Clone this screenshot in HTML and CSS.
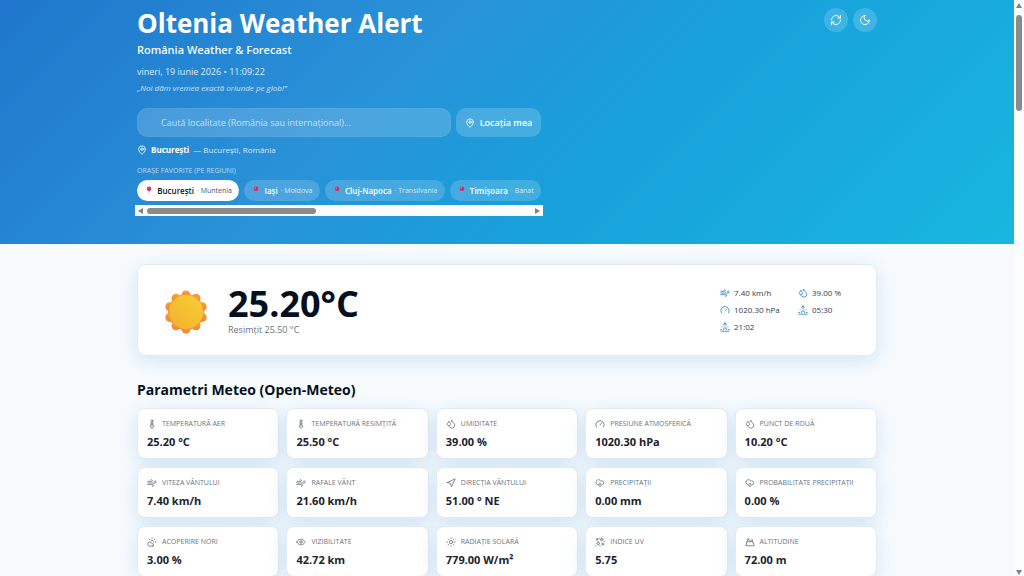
FILE: index.html
```html
<!DOCTYPE html>
<html lang="ro">

<head>
  <meta charset="UTF-8">
  <meta name="viewport" content="width=device-width, initial-scale=1" />
  <title>Oltenia Weather Alert</title>
  <link rel="stylesheet" href="styles.css">
</head>

<body>
  <!-- icon sprite -->
  <svg class="sprite" aria-hidden="true">
    <symbol id="i-pin" viewBox="0 0 24 24"><path d="M20 10c0 5-5.500 10.200-7.400 11.800a1 1 0 0 1-1.200 0C9.500 20.200 4 15 4 10a8 8 0 0 1 16 0z"/><circle cx="12" cy="10" r="3"/></symbol>
    <symbol id="i-refresh" viewBox="0 0 24 24"><path d="M3 12a9 9 0 0 1 9-9 9.750 9.750 0 0 1 6.740 2.740L21 8"/><path d="M21 3v5h-5"/><path d="M21 12a9 9 0 0 1-9 9 9.750 9.750 0 0 1-6.740-2.740L3 16"/><path d="M8 16H3v5"/></symbol>
    <symbol id="i-moon" viewBox="0 0 24 24"><path d="M12 3a6 6 0 0 0 9 9 9 9 0 1 1-9-9z"/></symbol>
    <symbol id="i-wind" viewBox="0 0 24 24"><path d="M12.800 19.600A2 2 0 1 0 14 16H2"/><path d="M17.500 8a2.500 2.500 0 1 1 2 4H2"/><path d="M9.800 4.400A2 2 0 1 1 11 8H2"/></symbol>
    <symbol id="i-drops" viewBox="0 0 24 24"><path d="M7 16.300c2.200 0 4-1.830 4-4.050 0-1.160-.570-2.260-1.710-3.190S7.290 6.750 7 5.300c-.290 1.450-1.140 2.840-2.290 3.760S3 11.100 3 12.250c0 2.220 1.800 4.050 4 4.050z"/><path d="M12.560 6.600A10.970 10.970 0 0 0 14 3.020c.5 2.500 2 4.900 4 6.500s3 3.500 3 5.500a6.980 6.980 0 0 1-11.910 4.970"/></symbol>
    <symbol id="i-gauge" viewBox="0 0 24 24"><path d="m12 14 4-4"/><path d="M3.340 19a10 10 0 1 1 17.320 0"/></symbol>
    <symbol id="i-sunrise" viewBox="0 0 24 24"><path d="M12 2v8"/><path d="m4.930 10.930 1.410 1.410"/><path d="M2 18h2"/><path d="M20 18h2"/><path d="m19.070 10.930-1.410 1.410"/><path d="M22 22H2"/><path d="m8 6 4-4 4 4"/><path d="M16 18a4 4 0 0 0-8 0"/></symbol>
    <symbol id="i-thermo" viewBox="0 0 24 24"><path d="M14 4v10.540a4 4 0 1 1-4 0V4a2 2 0 0 1 4 0z"/><path d="M12 9v8"/></symbol>
    <symbol id="i-nav" viewBox="0 0 24 24"><path d="m3 11 19-9-9 19-2-8-8-2z"/></symbol>
    <symbol id="i-rain" viewBox="0 0 24 24"><path d="M8 16H7A6 6 0 1 1 13.500 7H16a4.500 4.500 0 0 1 1 9"/><path d="M12 13c-1 1.500-2.500 3-2.500 5a2.500 2.500 0 0 0 5 0c0-2-1.500-3.500-2.500-5z"/></symbol>
    <symbol id="i-cloudsun" viewBox="0 0 24 24"><path d="M12 2v2"/><path d="m4.930 4.930 1.410 1.410"/><path d="M20 12h2"/><path d="m19.070 4.930-1.410 1.410"/><path d="M15.950 12.650a4 4 0 0 0-5.930-4.130"/><path d="M13 22H7a5 5 0 1 1 4.900-6H13a3 3 0 0 1 0 6z"/></symbol>
    <symbol id="i-eye" viewBox="0 0 24 24"><path d="M2 12s3.500-7 10-7 10 7 10 7-3.500 7-10 7-10-7-10-7z"/><circle cx="12" cy="12" r="3"/></symbol>
    <symbol id="i-sun" viewBox="0 0 24 24"><circle cx="12" cy="12" r="4"/><path d="M12 2v2M12 20v2M4.930 4.930l1.410 1.410M17.660 17.660l1.410 1.410M2 12h2M20 12h2M6.340 17.660l-1.410 1.410M19.070 4.930l-1.410 1.410"/></symbol>
    <symbol id="i-uv" viewBox="0 0 24 24"><path d="M8 11.500 9.300 14l2.700 1.500L9.300 17 8 19.500 6.700 17 4 15.500 6.700 14z"/><path d="M16 2.500 17.200 5l2.800 1-2.800 1.500L16 10l-1.200-2.500L12 6l2.800-1z"/><path d="M5 3v5M2.500 5.500h5M19 14v6M16 17h6M12 21v1M22 10v1M2 20v1M10 3v1"/></symbol>
    <symbol id="i-mountain" viewBox="0 0 24 24"><path d="M7 4 2 21h20L17 6l-4 5z"/><path d="m5 12 4-2 3 3 3-3 4 3"/></symbol>
    <symbol id="i-pushpin" viewBox="0 0 24 24"><path d="M11 11h2l-.5 12h-1z" fill="#8d9aac"/><circle cx="12" cy="7" r="6" fill="#e0245e"/><circle cx="10" cy="5" r="2" fill="#f5749a"/></symbol>
  </svg>

  <div class="window">
    <div class="page">
      <header class="hero">
        <div class="container hero-inner">
          <div class="hero-main">
            <h1>Oltenia Weather Alert</h1>
            <div class="subtitle">România Weather &amp; Forecast</div>
            <div class="date">vineri, 19 iunie 2026 • 11:09:22</div>
            <div class="motto">„Noi dăm vremea exactă oriunde pe glob!”</div>
            <form class="search">
              <input type="text" aria-label="Caută localitate" placeholder="Caută localitate (România sau internațional)..." />
              <button type="button" class="locate"><svg class="icon"><use href="#i-pin"/></svg>Locația mea</button>
            </form>
            <div class="place"><svg class="icon"><use href="#i-pin"/></svg><strong>București</strong><span>— București, România</span></div>
            <div class="fav-title">ORAȘE FAVORITE (PE REGIUNI)</div>
            <div class="favs">
              <button class="chip active"><svg class="pushpin"><use href="#i-pushpin"/></svg>București <small>· Muntenia</small></button>
              <button class="chip"><svg class="pushpin"><use href="#i-pushpin"/></svg>Iași <small>· Moldova</small></button>
              <button class="chip"><svg class="pushpin"><use href="#i-pushpin"/></svg>Cluj-Napoca <small>· Transilvania</small></button>
              <button class="chip"><svg class="pushpin"><use href="#i-pushpin"/></svg>Timișoara <small>· Banat</small></button>
            </div>
            <div class="hbar"><i class="arrow left"></i><div class="track"><div class="thumb"></div></div><i class="arrow right"></i></div>
          </div>
          <div class="actions">
            <button aria-label="Reîncarcă"><svg class="icon"><use href="#i-refresh"/></svg></button>
            <button aria-label="Mod întunecat"><svg class="icon"><use href="#i-moon"/></svg></button>
          </div>
        </div>
      </header>

      <main class="container">
        <section class="current">
          <svg class="sun" viewBox="0 0 44 44" aria-hidden="true">
            <defs>
              <linearGradient id="ray" x1="0" y1="0" x2="0" y2="1"><stop offset="0" stop-color="#f5a43a"/><stop offset="1" stop-color="#f5823c"/></linearGradient>
              <linearGradient id="disc" x1="1" y1="0" x2="0" y2="1"><stop offset="0" stop-color="#f8cf35"/><stop offset="1" stop-color="#f3b02f"/></linearGradient>
            </defs>
            <g fill="url(#ray)">
              <circle cx="22" cy="22" r="18"/>
              <circle cx="22" cy="5" r="4.500"/><circle cx="32" cy="8.250" r="4.500"/><circle cx="38.200" cy="16.750" r="4.500"/><circle cx="38.200" cy="27.250" r="4.500"/><circle cx="32" cy="35.750" r="4.500"/>
              <circle cx="22" cy="39" r="4.500"/><circle cx="12" cy="35.750" r="4.500"/><circle cx="5.800" cy="27.250" r="4.500"/><circle cx="5.800" cy="16.750" r="4.500"/><circle cx="12" cy="8.250" r="4.500"/>
            </g>
            <circle cx="22" cy="22" r="17" fill="url(#disc)"/>
          </svg>
          <div class="reading">
            <div class="temp">25.20°C</div>
            <div class="feels">Resimțit 25.50 °C</div>
          </div>
          <div class="facts">
            <div><svg class="icon"><use href="#i-wind"/></svg>7.40 km/h</div>
            <div><svg class="icon"><use href="#i-drops"/></svg>39.00 %</div>
            <div><svg class="icon"><use href="#i-gauge"/></svg>1020.30 hPa</div>
            <div><svg class="icon"><use href="#i-sunrise"/></svg>05:30</div>
            <div><svg class="icon"><use href="#i-sunrise"/></svg>21:02</div>
          </div>
        </section>

        <h2>Parametri Meteo (Open-Meteo)</h2>
        <section class="params">
          <div class="param"><div class="label"><svg class="icon"><use href="#i-thermo"/></svg>TEMPERATURĂ AER</div><div class="value">25.20 °C</div></div>
          <div class="param"><div class="label"><svg class="icon"><use href="#i-thermo"/></svg>TEMPERATURĂ RESIMȚITĂ</div><div class="value">25.50 °C</div></div>
          <div class="param"><div class="label"><svg class="icon"><use href="#i-drops"/></svg>UMIDITATE</div><div class="value">39.00 %</div></div>
          <div class="param"><div class="label"><svg class="icon"><use href="#i-gauge"/></svg>PRESIUNE ATMOSFERICĂ</div><div class="value">1020.30 hPa</div></div>
          <div class="param"><div class="label"><svg class="icon"><use href="#i-drops"/></svg>PUNCT DE ROUĂ</div><div class="value">10.20 °C</div></div>
          <div class="param"><div class="label"><svg class="icon"><use href="#i-wind"/></svg>VITEZA VÂNTULUI</div><div class="value">7.40 km/h</div></div>
          <div class="param"><div class="label"><svg class="icon"><use href="#i-wind"/></svg>RAFALE VÂNT</div><div class="value">21.60 km/h</div></div>
          <div class="param"><div class="label"><svg class="icon"><use href="#i-nav"/></svg>DIRECȚIA VÂNTULUI</div><div class="value">51.00 ° NE</div></div>
          <div class="param"><div class="label"><svg class="icon"><use href="#i-rain"/></svg>PRECIPITAȚII</div><div class="value">0.00 mm</div></div>
          <div class="param"><div class="label"><svg class="icon"><use href="#i-rain"/></svg>PROBABILITATE PRECIPITAȚII</div><div class="value">0.00 %</div></div>
          <div class="param"><div class="label"><svg class="icon"><use href="#i-cloudsun"/></svg>ACOPERIRE NORI</div><div class="value">3.00 %</div></div>
          <div class="param"><div class="label"><svg class="icon"><use href="#i-eye"/></svg>VIZIBILITATE</div><div class="value">42.72 km</div></div>
          <div class="param"><div class="label"><svg class="icon"><use href="#i-sun"/></svg>RADIAȚIE SOLARĂ</div><div class="value">779.00 W/m²</div></div>
          <div class="param"><div class="label"><svg class="icon"><use href="#i-uv"/></svg>INDICE UV</div><div class="value">5.75</div></div>
          <div class="param"><div class="label"><svg class="icon"><use href="#i-mountain"/></svg>ALTITUDINE</div><div class="value">72.00 m</div></div>
        </section>
      </main>
    </div>
    <div class="vbar"><i class="arrow up"></i><div class="track"><div class="thumb"></div></div><i class="arrow down"></i></div>
  </div>
</body>

</html>
```
FILE: styles.css
```css
* {
  margin: 0;
  padding: 0;
  box-sizing: border-box;
}

body,
button,
input {
  font-family: "Open Sans", "Noto Sans", sans-serif;
}

body {
  background-color: #f7fbfe;
  color: #06101f;
  overflow: hidden;
}

button {
  border: none;
  color: #fff;
  cursor: pointer;
}

.sprite {
  position: absolute;
  width: 0;
  height: 0;
}

.icon {
  width: 10px;
  height: 10px;
  flex: none;
  fill: none;
  stroke: currentColor;
  stroke-width: 2;
  stroke-linecap: round;
  stroke-linejoin: round;
}

.window {
  display: flex;
  height: 100vh;
}

.page {
  flex: 1;
  overflow: hidden;
}

.container {
  width: 90%;
  max-width: 740px;
  margin: 0 auto;
}

/* header */
.hero {
  background: linear-gradient(135deg, #1f76cc 0%, #2991d8 35%, #18a0db 60%, #18b7e0 100%);
  color: #fff;
  padding: 4px 0 28px;
}

.hero-inner {
  display: flex;
  justify-content: space-between;
  align-items: flex-start;
}

.hero-main {
  width: 404px;
}

h1 {
  font-size: 26px;
  line-height: 38px;
  font-weight: 700;
  white-space: nowrap;
}

.subtitle {
  font-size: 11px;
  line-height: 16px;
  font-weight: 600;
  opacity: .95;
}

.date {
  margin-top: 7px;
  font-size: 9px;
  line-height: 14px;
  opacity: .85;
}

.motto {
  margin-top: 2px;
  font-size: 8px;
  line-height: 14px;
  font-style: italic;
  opacity: .75;
}

.search {
  display: flex;
  gap: 5px;
  height: 29px;
  margin-top: 13px;
}

.search input {
  flex: 1;
  min-width: 0;
  border: 1px solid rgba(255, 255, 255, .04);
  border-radius: 10px;
  background-color: rgba(255, 255, 255, .17);
  padding: 0 23px;
  font-size: 9px;
  color: #fff;
  outline: none;
}

.search input::placeholder {
  color: rgba(255, 255, 255, .7);
}

.locate {
  display: flex;
  align-items: center;
  justify-content: center;
  gap: 5px;
  width: 85px;
  border-radius: 10px;
  background-color: rgba(255, 255, 255, .18);
  font-size: 9px;
  font-weight: 600;
}

.place {
  display: flex;
  align-items: center;
  gap: 4px;
  margin-top: 6px;
  font-size: 8px;
  line-height: 14px;
}

.place span {
  opacity: .8;
}

.fav-title {
  margin-top: 8px;
  font-size: 7px;
  line-height: 12px;
  opacity: .65;
}

.favs {
  display: flex;
  gap: 5px;
  margin-top: 3px;
}

.chip {
  display: flex;
  align-items: center;
  justify-content: center;
  flex: auto;
  gap: 3px;
  height: 21px;
  border-radius: 11px;
  background-color: rgba(255, 255, 255, .17);
  font-size: 8px;
  font-weight: 600;
  white-space: nowrap;
}

.chip small {
  font-size: 7px;
  font-weight: 400;
  opacity: .75;
}

.chip.active {
  background-color: #fff;
  color: #0b1526;
}

.pushpin {
  width: 10px;
  height: 9px;
}

.actions {
  display: flex;
  gap: 5px;
  padding-top: 4px;
}

.actions button {
  display: flex;
  align-items: center;
  justify-content: center;
  width: 24px;
  height: 24px;
  border-radius: 50%;
  background-color: rgba(255, 255, 255, .17);
}

.actions .icon {
  width: 12px;
  height: 12px;
}

/* scrollbars */
.hbar,
.vbar {
  display: flex;
  align-items: center;
  background-color: #fcfcfc;
}

.hbar {
  height: 11px;
  margin: 4px -2px 0;
  padding: 0 3px;
  gap: 4px;
}

.vbar {
  flex-direction: column;
  width: 10px;
  padding: 3px 0 1px;
  gap: 7px;
}

.track {
  flex: 1;
}

.thumb {
  border-radius: 3px;
  background-color: #8b8b8b;
}

.hbar .thumb {
  width: 44%;
  height: 6px;
}

.vbar .thumb {
  width: 6px;
  height: 96px;
}

.arrow {
  border: 3px solid transparent;
}

.arrow.left {
  border-right: 5px solid #808080;
  border-left: none;
}

.arrow.right {
  border-left: 5px solid #808080;
  border-right: none;
}

.arrow.up {
  border-bottom: 5px solid #808080;
  border-top: none;
}

.arrow.down {
  border-top: 5px solid #808080;
  border-bottom: none;
}

/* current weather */
.current,
.param {
  background-color: #fff;
  border: 1px solid #e2ebf3;
  box-shadow: 0 5px 20px rgba(30, 120, 190, .17);
}

.current {
  display: flex;
  align-items: center;
  height: 92px;
  margin-top: 20px;
  padding: 0 26px;
  border-radius: 9px;
}

.sun {
  width: 44px;
  height: 44px;
  margin-top: 4px;
}

.reading {
  margin-left: 20px;
}

.temp {
  font-size: 36px;
  line-height: 40px;
  font-weight: 700;
}

.feels {
  font-size: 9px;
  line-height: 12px;
  color: #6a7380;
}

.facts {
  display: grid;
  grid-template-columns: 78px 52px;
  row-gap: 3px;
  margin-left: auto;
  font-size: 8px;
  line-height: 14px;
  color: #333c48;
}

.facts div {
  display: flex;
  align-items: center;
  gap: 4px;
}

.facts .icon {
  color: #2b86bd;
}

/* parameters */
h2 {
  margin: 24px 0 8px;
  font-size: 14px;
  line-height: 20px;
  font-weight: 700;
}

.params {
  display: grid;
  grid-template-columns: repeat(5, 1fr);
  gap: 8px 7px;
}

.param {
  height: 51px;
  padding: 8px 9px;
  border-radius: 8px;
}

.label {
  display: flex;
  align-items: center;
  gap: 5px;
  font-size: 7px;
  line-height: 14px;
  color: #6a7380;
  white-space: nowrap;
}

.value {
  margin-top: 2px;
  font-size: 11px;
  line-height: 18px;
  font-weight: 700;
  color: #1b232e;
}
```
